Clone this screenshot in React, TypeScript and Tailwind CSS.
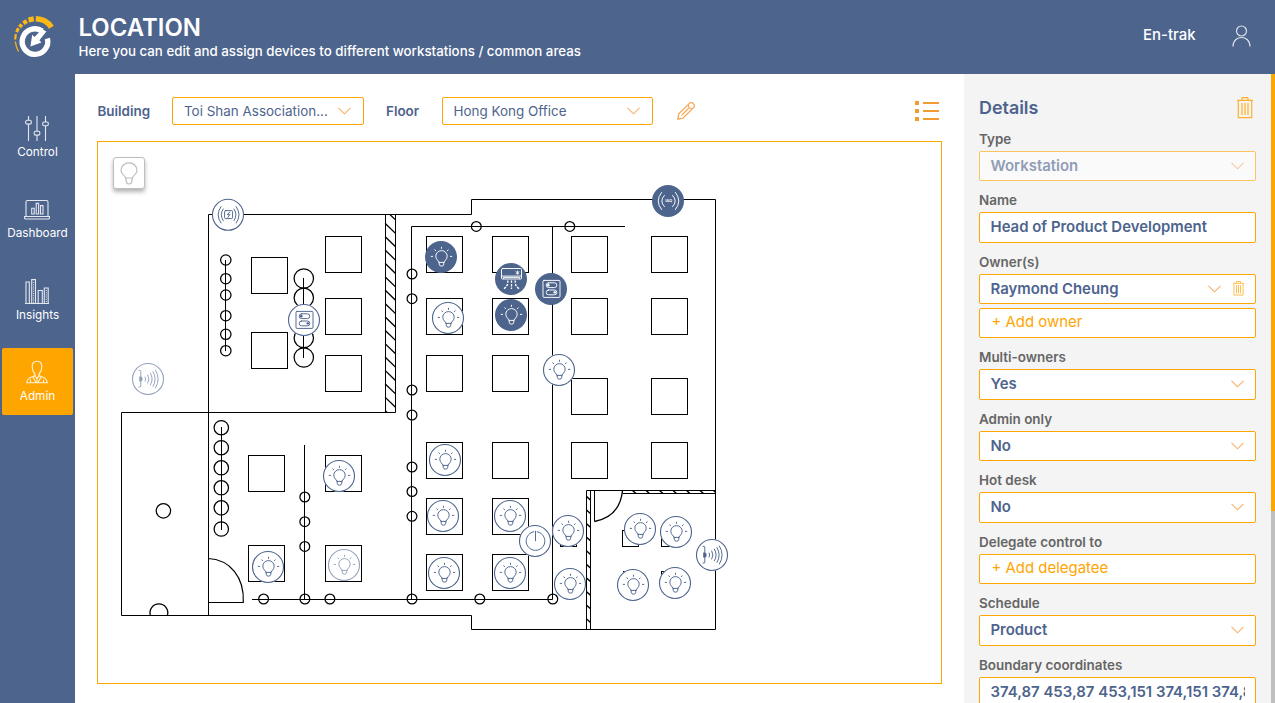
import React from "react";

const desks: [number, number][] = [
  [325.5, 236.5], [325.5, 298.5], [325.5, 355.5], [251.5, 257.5], [251.5, 332.5],
  [426.5, 236.5], [426.5, 298.5], [426.5, 355.5], [426.5, 442.5], [426.5, 498.5], [426.5, 554.5],
  [492.5, 236.5], [492.5, 298.5], [492.5, 355.5], [492.5, 442.5], [492.5, 498.5], [492.5, 554.5],
  [571.5, 236.5], [571.5, 298.5], [571.5, 378.5], [571.5, 442.5],
  [651.5, 236.5], [651.5, 298.5], [651.5, 378.5], [651.5, 442.5],
  [248.5, 455.5], [325.5, 455.5], [248.5, 545.5], [325.5, 545.5],
];

const seats: [number, number][] = [
  [560.5, 530.5], [622.5, 530.5], [661.5, 530.5], [623.5, 571.5], [661.5, 571.5],
];

const nodes: [number, number, number][] = [
  [225.8, 260, 5.2], [225.8, 278.7, 5.2], [225.8, 295, 5.2], [225.8, 315.7, 5.2], [225.8, 334.3, 5.2], [225.8, 350.7, 5.2],
  [303.8, 278.5, 9.7], [303.8, 297.8, 9.7], [303.8, 338, 9.7], [303.8, 357.5, 9.7],
  [412, 274, 4.9], [412, 298.7, 4.9], [412, 390, 4.9], [412, 415, 4.9], [412, 467, 4.9], [412, 491.5, 4.9], [412, 516.3, 4.9],
  [476.3, 226.4, 4.9], [569.8, 226.4, 4.9],
  [263.6, 599, 4.9], [304.9, 599, 4.9], [329.9, 599, 4.9], [412, 599, 4.9], [479.8, 599, 4.9], [552.8, 599, 4.9],
  [304.8, 497, 4.9], [304.8, 521.7, 4.9], [304.8, 546.4, 4.9],
  [221.3, 427.7, 7.2], [221.3, 447.7, 7.2], [221.3, 467.8, 7.2], [221.3, 487.8, 7.2], [221.3, 507.8, 7.2], [221.3, 529, 7.2],
  [163.4, 510.8, 7.2],
];

type Kind = "bulb" | "wave" | "switch" | "ac" | "iaq" | "power" | "meter";
type Look = "on" | "off" | "faded";

const devices: [number, number, Kind, Look][] = [
  [228, 214.8, "meter", "off"],
  [148, 379, "wave", "faded"],
  [304, 320, "switch", "off"],
  [441, 257, "bulb", "on"],
  [511, 279, "ac", "on"],
  [551, 289, "switch", "on"],
  [448, 318, "bulb", "off"],
  [511, 315, "bulb", "on"],
  [559, 370, "bulb", "off"],
  [668, 201, "iaq", "on"],
  [339, 476, "bulb", "off"],
  [268, 567, "bulb", "off"],
  [344, 565, "bulb", "faded"],
  [445, 460, "bulb", "off"],
  [443, 516, "bulb", "off"],
  [510, 516, "bulb", "off"],
  [535, 541, "power", "off"],
  [568, 531, "bulb", "off"],
  [570, 584, "bulb", "off"],
  [444, 573, "bulb", "off"],
  [510, 573, "bulb", "off"],
  [640, 529, "bulb", "off"],
  [676, 532, "bulb", "off"],
  [633, 585, "bulb", "off"],
  [675, 583, "bulb", "off"],
  [712, 555, "wave", "off"],
];

function Glyph({ kind }: { kind: Kind }) {
  switch (kind) {
    case "bulb":
      return (
        <>
          <path d="M-2.2 5 C-2.2 3.6 -5.2 2.6 -5.2 -.8 A5.7 5.6 0 0 1 6.2 -.8 C6.2 2.6 3.2 3.6 3.2 5 Z" />
          <path d="M-1.8 5.2 V7.2 Q-1.6 9.2 .5 9.2 Q2.6 9.2 2.8 7.2 V5.2" />
          <path d="M.5 -9.8 V-8.6 M-6.2 -7.2 L-5.4 -6.3 M7.2 -7.2 L6.4 -6.3 M-9.8 -.6 H-8.4 M9.4 -.6 H10.8" />
        </>
      );
    case "wave":
      return (
        <>
          <path d="M-9 -8.6 H-8 Q-7.2 -8.6 -7.2 -7.8 V7.2 Q-7.2 8 -8 8 H-9" />
          <path d="M-8.8 -2.4 H-7 Q-5.4 -2.2 -5.4 0 Q-5.4 2.2 -7 2.4 H-8.8 Z" fill="currentColor" stroke="none" />
          <path d="M-2.8 -2 Q-1.6 0 -2.8 2 M-.2 -4 Q2.2 0 -.2 4 M2.4 -5.8 Q6 0 2.4 5.8 M5 -7.4 Q9.4 0 5 7.4 M7.4 -9 Q13 0 7.4 9" />
        </>
      );
    case "switch":
      return (
        <>
          <rect x="-8" y="-8.6" width="17" height="17" rx="1" />
          <rect x="-4.8" y="-6.2" width="10.6" height="4.8" rx="2.4" />
          <rect x="-4.8" y="1" width="10.6" height="4.8" rx="2.4" />
          <rect x="-4" y="-5" width="2.6" height="2.4" rx="1" fill="currentColor" stroke="none" />
          <rect x="2.4" y="2.2" width="2.6" height="2.4" rx="1" fill="currentColor" stroke="none" />
        </>
      );
    case "ac":
      return (
        <>
          <rect x="-9.5" y="-10.5" width="20" height="10.5" rx="1" />
          <path d="M-9 -2.9 H10 M-7.5 -.6 V-1.6 H8.5 V-.6" />
          <path d="M6.5 -8 V-4.6 M5 -7.2 L8 -5.4 M8 -7.2 L5 -5.4" strokeWidth=".8" />
          <path
            d="M-3.2 1.4 V4 Q-3.6 7 -7 9.8 M.5 1.4 V10 M4.2 1.4 V4 Q4.6 7 8 9.8"
            strokeDasharray="2.4 1.2"
            strokeLinecap="butt"
            strokeWidth="1.3"
          />
        </>
      );
    case "iaq":
      return (
        <>
          <path d="M-3.6 -5.6 Q-9 0 -3.6 5.6 M-6.4 -8.6 Q-13.4 0 -6.4 8.6 M4.6 -5.6 Q10 0 4.6 5.6 M7.4 -8.6 Q14.4 0 7.4 8.6" />
          <text x=".6" y="1.4" textAnchor="middle" fontSize="4" fontWeight="600" fill="currentColor" stroke="none">IAQ</text>
        </>
      );
    case "meter":
      return (
        <>
          <rect x="-3.4" y="-4.2" width="8" height="8" rx="1" />
          <path d="M1.6 -2.8 L-.6 -.2 H1.8 L-.2 2.6" />
          <path d="M-4.8 -5.8 Q-8.8 0 -4.8 5.8 M-7 -8.2 Q-12.8 0 -7 8.2 M6 -5.8 Q10 0 6 5.8 M8.2 -8.2 Q14 0 8.2 8.2" />
        </>
      );
    case "power":
      return (
        <>
          <path d="M-1.2 -9.3 A9.4 9.4 0 1 0 2.2 -9.3" />
          <path d="M.5 -9.8 V-.2" />
        </>
      );
  }
}

function Device({ x, y, kind, look }: { x: number; y: number; kind: Kind; look: Look }) {
  return (
    <g transform={`translate(${x} ${y})`} className={look === "on" ? "text-white" : "text-[#4d648d]"}>
      <circle r="16" fill={look === "on" ? "#4d648d" : "#fff"} />
      <g opacity={look === "faded" ? 0.6 : 1} fill="none" stroke="currentColor" strokeWidth=".95" strokeLinecap="round">
        {look !== "on" && <circle r="15.5" strokeWidth="1.1" />}
        <Glyph kind={kind} />
      </g>
    </g>
  );
}

function FloorPlan() {
  return (
    <svg viewBox="98 142 843 541" className="block h-full w-full" role="img" aria-label="Floor plan">
      <defs>
        <clipPath id="wall-a"><rect x="384.5" y="214" width="11.5" height="199" /></clipPath>
        <clipPath id="wall-b"><rect x="586" y="490" width="5" height="139" /></clipPath>
        <clipPath id="wall-c"><rect x="622" y="490" width="93" height="4" /></clipPath>
      </defs>
      <g fill="none" stroke="#000" strokeWidth="1">
        <path d="M208.5 214.5 H471.5 V199.5 H715.5 V629.5 H471.5 V615.5 H121.5 V412.5 H395.5 V214.5 M208.5 214.5 V615.5 M385.5 214.5 V412.5" />
        <path d="M411.5 599.5 V226.5 H625 M552.5 226.5 V599.5 M252 599.5 H552.5 M304.5 445 V599" />
        <path d="M225.5 260 V351 M303.5 278 V358 M221.5 427 V530" />
        <path d="M586.5 629.5 V490.5 H715.5 M590.5 490.5 V629.5 M594.5 490.5 V521.5 M622.5 493.5 H715.5" />
        <path d="M594.5 521.5 Q620 516.5 622.5 490.5" strokeWidth="1.3" />
        <path d="M208 558.5 C230 559.5 244.5 577 243.3 602.5 H208.5" strokeWidth="1.2" />
        <path d="M150.3 615 A8.9 8.9 0 1 1 167.5 615" strokeWidth="1.3" />
        <g clipPath="url(#wall-a)" strokeWidth="1.3">
          {Array.from({ length: 16 }, (_, i) => (
            <path key={i} d={`M385 ${209.8 + i * 13.38} l11 10.6`} />
          ))}
        </g>
        <g clipPath="url(#wall-b)" strokeWidth="1.4">
          {Array.from({ length: 11 }, (_, i) => (
            <path key={i} d={`M586 ${496 + i * 13.6} l5 4.5`} />
          ))}
        </g>
        <g clipPath="url(#wall-c)" strokeWidth="1.4">
          {Array.from({ length: 7 }, (_, i) => (
            <path key={i} d={`M${632 + i * 13.5} 490 l4.5 4`} />
          ))}
        </g>
        {desks.map(([x, y]) => (
          <rect key={`${x}-${y}`} x={x} y={y} width="36" height="36" />
        ))}
        {seats.map(([x, y]) => (
          <rect key={`${x}-${y}`} x={x} y={y} width="16" height="16" />
        ))}
        {nodes.map(([x, y, r]) => (
          <circle key={`${x}-${y}`} cx={x} cy={y} r={r} strokeWidth="1.25" />
        ))}
      </g>
      {devices.map(([x, y, kind, look]) => (
        <Device key={`${x}-${y}`} x={x} y={y} kind={kind} look={look} />
      ))}
    </svg>
  );
}

function Chevron({ className = "" }: { className?: string }) {
  return (
    <svg viewBox="0 0 13 8" className={`h-2 w-[13px] shrink-0 ${className}`} fill="none" stroke="#f8b06a" strokeWidth="1.1">
      <path d="M.5 .8 L6.5 6.8 L12.5 .8" />
    </svg>
  );
}

function Trash({ className }: { className: string }) {
  return (
    <svg viewBox="0 0 16 22" className={className} fill="none" stroke="#ffb02a" strokeWidth="1.2">
      <path d="M0 3.3 H16 M5 3.3 V1.2 Q5 .6 5.6 .6 H10.4 Q11 .6 11 1.2 V3.3 M1.3 3.3 V20.6 H14.7 V3.3 M5 6 V18 M8 6 V18 M11 6 V18" />
    </svg>
  );
}

function Label({ children }: { children: React.ReactNode }) {
  return <div className="flex h-[31px] items-end pb-[3.3px] text-[13.44px] font-semibold leading-[18px] text-[#666]">{children}</div>;
}

const box =
  "flex h-[30.5px] w-full items-center rounded-[2px] border border-[#ffa500] bg-white pb-[.3px] pl-[10.5px] text-[14.93px] text-[#4d648d]";

function Select({ label, value, muted = false }: { label: string; value: string; muted?: boolean }) {
  return (
    <div>
      <Label>{label}</Label>
      <div className={`${box} justify-between pr-[11px] font-semibold ${muted ? "opacity-60" : ""}`}>
        <span>{value}</span>
        <Chevron />
      </div>
    </div>
  );
}

function NavItem({ label, active = false, children }: { label: string; active?: boolean; children: React.ReactNode }) {
  return (
    <a className={`mb-[14.5px] flex h-[67px] w-[71px] flex-col items-center rounded-[2px] pt-[12px] text-[11.75px] leading-[15px] text-white ${active ? "bg-[#ffa500]" : ""}`}>
      <svg viewBox="0 0 26 26" className="mb-[3px] mr-px h-[26px] w-[26px] shrink-0" fill="none" stroke="#fff" strokeOpacity=".85" strokeWidth="1.1">
        {children}
      </svg>
      {label}
    </a>
  );
}

export default function App() {
  return (
    <div className="flex h-[703px] w-[1275px] flex-col overflow-hidden bg-white font-['Inter',sans-serif]">
      <header className="flex h-[74px] shrink-0 bg-[#4d648d] text-white">
        <div className="w-[78.5px] shrink-0 pl-3 pt-3.5">
          <svg viewBox="12 14 44 44" className="h-11 w-11" fill="none">
            <path d="M35.8 18.8 A19 19 0 0 1 51.4 27.3" stroke="#fdb813" strokeWidth="5.6" />
            <path d="M33.8 18.8 L28.5 20" stroke="#fdb813" strokeWidth="5" />
            <path d="M26.8 20.9 L23.4 23.2" stroke="#fdb813" strokeWidth="4.2" />
            <path d="M21.8 24.3 L19.5 27" stroke="#fdb813" strokeWidth="3.6" />
            <path d="M18.4 28.2 L16.6 32.2" stroke="#fdb813" strokeWidth="3" />
            <path d="M15.8 34 L15.2 39.5" stroke="#fdb813" strokeWidth="2.2" />
            <path d="M15.3 41.5 Q16 47 18.5 51.5" stroke="#fdb813" strokeWidth="1.3" />
            <path d="M42.2 31 A12.8 12.8 0 1 0 47.4 38.5" stroke="#fff" strokeWidth="5.4" />
            <path d="M46.4 31.4 L39.4 40.2 L41.4 42.4 L30.4 46.4 L32.2 34.8 L34.6 37 L42 29 Z" fill="#fff" />
          </svg>
        </div>
        <div className="flex-1 pt-[13px]">
          <h1 className="text-[23.9px] font-semibold leading-[29px]">LOCATION</h1>
          <p className="text-[13.32px] font-medium leading-[18px]">Here you can edit and assign devices to different workstations / common areas</p>
        </div>
        <div className="flex items-start pr-[23px]">
          <span className="pt-6 text-[14.93px] font-medium leading-[22px]">En-trak</span>
          <svg viewBox="0 0 20 22" className="ml-[36.5px] mt-[25px] h-[22px] w-5" fill="none" stroke="#fff" strokeOpacity=".8" strokeWidth="1.2">
            <circle cx="9.5" cy="6" r="5" />
            <path d="M1 21.5 C1 9.5 18 9.5 18 21.5" />
          </svg>
        </div>
      </header>

      <div className="flex min-h-0 flex-1">
        <nav className="flex w-[75px] shrink-0 flex-col items-center bg-[#4d648d] pt-[29.5px]">
          <NavItem label="Control">
            <path d="M4.5 0 V4 M4.5 8.5 V25 M13 0 V15 M13 19.5 V25 M21.5 0 V6 M21.5 10 V25" />
            <rect x="1.6" y="4.3" width="5.8" height="3.8" rx="1.7" />
            <rect x="10.1" y="15.3" width="5.8" height="3.8" rx="1.7" />
            <rect x="18.6" y="6" width="5.8" height="3.8" rx="1.7" />
          </NavItem>
          <NavItem label="Dashboard">
            <path d="M2 19.5 V5 Q2 3.5 3.5 3.5 H22.5 Q24 3.5 24 5 V19.5 M.5 19.5 H25.5 V21 Q25.5 22 24 22 H2 Q.5 22 .5 21 Z" />
            <path d="M7.7 17 V11.3 H10.2 V17 Z M12.2 17 V6.4 H14.6 V17 Z M16.5 17 V8.6 H19 V17 Z" />
          </NavItem>
          <NavItem label="Insights">
            <path d="M1 24.5 H25 M2 24.5 V3 H5.3 V24.5 M7.7 24.5 V.6 H11.5 V24.5 M14.2 24.5 V11.5 H18.3 V24.5 M20.3 24.5 V9 H24.2 V24.5" />
            <path d="M9.6 3 V24 M22.3 11 V24" strokeDasharray="1 1.2" />
          </NavItem>
          <NavItem label="Admin" active>
            <path d="M13 1.3 C8 1.3 7.8 6 8.4 8.8 C8.8 11 10 13 11 14 V16.5 L13 18 L15 16.5 V14 C16 13 17.2 11 17.6 8.8 C18.2 6 18 1.3 13 1.3 Z" />
            <path d="M11 15.5 L5.5 18 Q3.2 19.2 2.7 22.7 H23.3 Q22.8 19.2 20.5 18 L15 15.5 M9 17 L12 22.5 M17 17 L14 22.5 M13 18 V22.5 M6.5 19.5 V22.5 M19.5 19.5 V22.5" />
          </NavItem>
        </nav>

        <main className="flex w-[889px] shrink-0 flex-col pl-[22px] pr-[22px] pt-[23px]">
          <div className="flex h-7 items-center text-[13.44px] text-[#4d648d]">
            <span className="w-[75px] pl-[.5px] font-semibold">Building</span>
            <div className="flex h-7 w-[192px] items-center justify-between rounded-[2px] border border-[#ffa500] pl-[11px] pr-[12px]">
              <span>Toi Shan Association...</span>
              <Chevron />
            </div>
            <span className="ml-[22px] w-[56px] font-semibold">Floor</span>
            <div className="flex h-7 w-[211px] items-center justify-between rounded-[2px] border border-[#ffa500] pl-[10.5px] pr-[12px]">
              <span>Hong Kong Office</span>
              <Chevron />
            </div>
            <svg viewBox="0 0 18 18" className="ml-[24px] h-[18px] w-[18px]" fill="none" stroke="#f7a24a" strokeWidth="1.2">
              <path d="M.8 17.2 L1.8 11.8 L12.2 1.6 Q14.4 -.2 16.4 1.6 Q18.3 3.6 16.5 5.7 L6.2 16 Z M11.2 2.8 Q11.6 6.4 15.2 6.8 M4.6 13.4 L11.8 6.2" />
            </svg>
            <svg viewBox="0 0 24 20" className="ml-auto mr-[3px] h-5 w-6" fill="#f29b30">
              <path d="M0 0 H4 V4 H0 Z M0 8 H4 V12 H0 Z M0 16 H4 V20 H0 Z M8 1 H24 V3 H8 Z M8 9 H24 V11 H8 Z M8 17 H24 V19 H8 Z" />
            </svg>
          </div>
          <section className="relative mt-4 h-[543px] w-[845px] border border-[#ffa500]">
            <FloorPlan />
            <button className="absolute left-[15px] top-[15px] flex h-8 w-8 items-center justify-center rounded-[3px] border border-[#bfbfbf] bg-white shadow-[0_3px_4px_rgba(0,0,0,0.3)]" aria-label="Lights">
              <svg viewBox="0 0 18 23" className="h-[23px] w-[18px]" fill="none" stroke="#bdbdbd" strokeWidth="1.2">
                <path d="M5.5 16 C5.5 13.5 1 12.5 1 8.5 A8 7.7 0 0 1 17 8.5 C17 12.5 12.5 13.5 12.5 16 Z" />
                <path d="M5.8 16 L6.5 20.5 Q7 22 9 22 Q11 22 11.5 20.5 L12.2 16" />
              </svg>
            </button>
          </section>
        </main>

        <aside className="w-[307px] shrink-0 overflow-hidden bg-[#f4f4f4] pl-[15px] pr-[15px] pt-[21.9px]">
          <div className="flex h-6 items-center justify-between">
            <h2 className="text-[17.9px] font-semibold leading-6 text-[#4d648d]">Details</h2>
            <Trash className="mr-[3px] h-[22px] w-4" />
          </div>
          <Select label="Type" value="Workstation" muted />
          <Label>Name</Label>
          <div className={`${box} font-semibold`}>Head of Product Development</div>
          <Label>Owner(s)</Label>
          <div className={`${box} mb-[3.5px] pr-[11px] font-semibold`}>
            <span className="flex-1">Raymond Cheung</span>
            <Chevron />
            <Trash className="ml-[12px] h-[15px] w-[11px]" />
          </div>
          <div className={box}>
            <span className="pb-[1.7px] pl-[1px] text-[#ffa500]">+ Add owner</span>
          </div>
          <Select label="Multi-owners" value="Yes" />
          <Select label="Admin only" value="No" />
          <Select label="Hot desk" value="No" />
          <Label>Delegate control to</Label>
          <div className={box}>
            <span className="pb-[1.7px] pl-[1px] text-[#ffa500]">+ Add delegatee</span>
          </div>
          <Select label="Schedule" value="Product" />
          <Label>Boundary coordinates</Label>
          <div className={`${box} pr-[10px] font-semibold`}>
            <span className="overflow-hidden whitespace-nowrap">374,87 453,87 453,151 374,151 374,87</span>
          </div>
        </aside>
        <div className="flex w-1 shrink-0 flex-col bg-[#bfbfbf]">
          <div className="h-[437px] bg-[#ffa500]" />
        </div>
      </div>
    </div>
  );
}
